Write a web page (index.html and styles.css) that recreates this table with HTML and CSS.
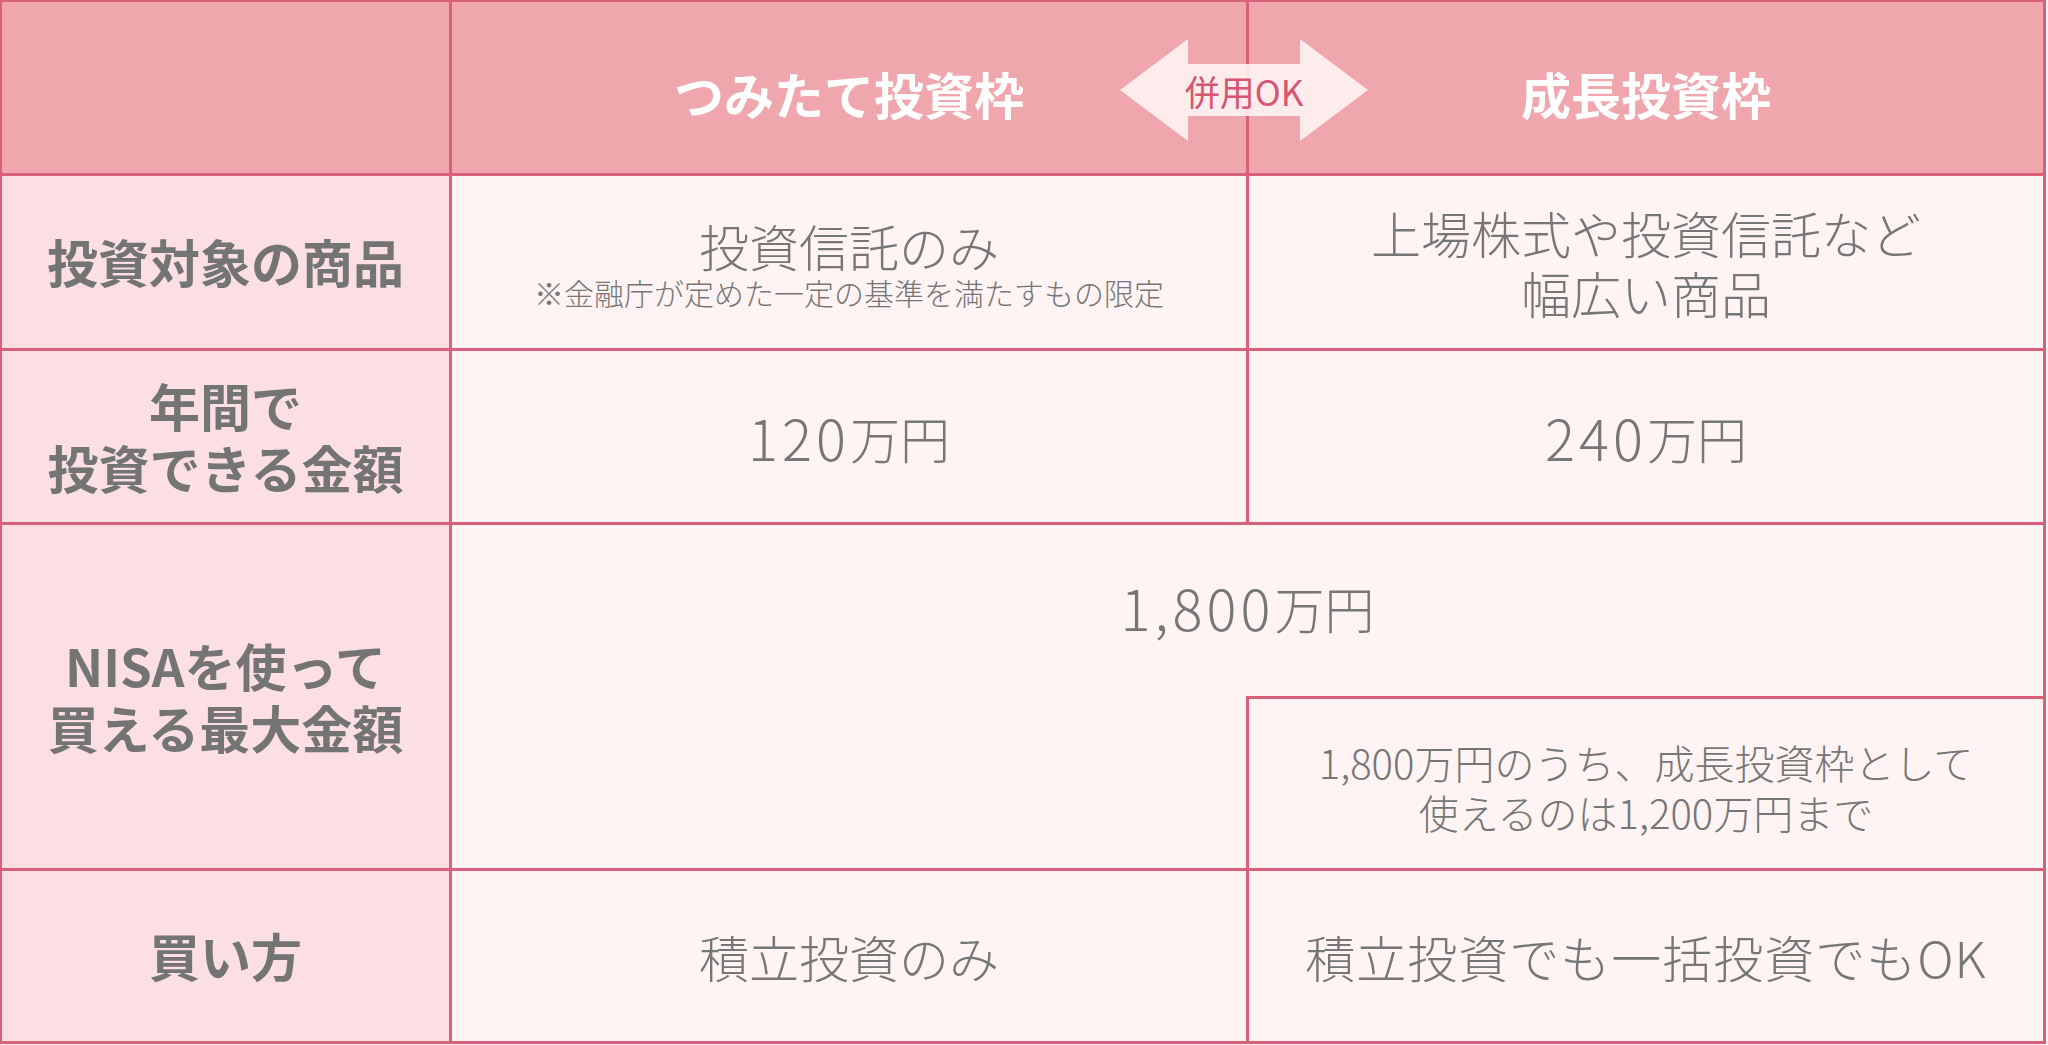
FILE: index.html
```html
<!DOCTYPE html>
<html lang="ja">
<head>
<meta charset="utf-8">
<title>NISA 比較表</title>
<link rel="stylesheet" href="styles.css">
</head>
<body>
<div class="table">
  <div class="cell head corner"></div>
  <div class="cell head">つみたて投資枠</div>
  <div class="cell head">成長投資枠</div>

  <div class="cell label">投資対象の商品</div>
  <div class="cell body">
    <div class="stack">
      <span class="main">投資信託のみ</span>
      <span class="note">※金融庁が定めた一定の基準を満たすもの限定</span>
    </div>
  </div>
  <div class="cell body">上場株式や投資信託など<br>幅広い商品</div>

  <div class="cell label">年間で<br>投資できる金額</div>
  <div class="cell body"><span class="digits">120</span>万円</div>
  <div class="cell body"><span class="digits">240</span>万円</div>

  <div class="cell label tall">NISAを使って<br>買える最大金額</div>
  <div class="cell body wide"><span class="digits">1,800</span>万円</div>
  <div class="cell body empty"></div>
  <div class="cell body sub">1,800万円のうち、成長投資枠として<br>使えるのは1,200万円まで</div>

  <div class="cell label">買い方</div>
  <div class="cell body">積立投資のみ</div>
  <div class="cell body wider">積立投資でも一括投資でもOK</div>

  <div class="badge">
    <svg class="arrow" viewBox="0 0 248 102" width="248" height="102">
      <polygon points="0,51 68,0 68,25 180,25 180,0 248,51 180,102 180,77 68,77 68,102" />
    </svg>
    <span class="badge-text">併用OK</span>
  </div>
</div>
</body>
</html>
```

FILE: styles.css
```css
* { box-sizing: border-box; }

html, body {
  margin: 0;
  padding: 0;
  background: #fff4f3;
}

body {
  font-family: "Noto Sans CJK JP", "Noto Sans", sans-serif;
  color: #777777;
}

.table {
  position: relative;
  width: 2046px;
  height: 1044px;
  display: grid;
  grid-template-columns: 450px 797px 1fr;
  grid-template-rows: 174px 175px 174px 171px 175px 1fr;
  border-top: 2px solid #d9607a;
  border-left: 2px solid #d9607a;
}

.cell {
  display: flex;
  align-items: center;
  justify-content: center;
  text-align: center;
  border-right: 3px solid #d9607a;
  border-bottom: 3px solid #d9607a;
  font-size: 50px;
  line-height: 1.2;
  background: #fff4f3;
}

.head {
  background: #f0a6ad;
  color: #ffffff;
  font-weight: 700;
  font-size: 50px;
  padding-top: 10px;
}

.label {
  background: #fbdfe3;
  font-weight: 700;
  color: #747474;
  font-size: 51px;
}

.label.tall {
  grid-row: 4 / 6;
}

.body {
  font-weight: 300;
  color: #767676;
}

.stack {
  display: flex;
  flex-direction: column;
  align-items: center;
}

.stack .main {
  font-size: 50px;
  line-height: 60px;
}

.stack .note {
  font-size: 30px;
  line-height: 34px;
}

.digits {
  font-size: 56px;
  line-height: 1;
  letter-spacing: 4px;
}

.wide {
  grid-column: 2 / 4;
  border-bottom: none;
  padding-bottom: 8px;
}

.empty {
  grid-column: 2;
}

.sub {
  border-top: 3px solid #d9607a;
  font-size: 40px;
  line-height: 50px;
  padding-top: 6px;
}

.wider {
  letter-spacing: 1px;
}

.badge {
  position: absolute;
  left: 1118px;
  top: 37px;
  width: 248px;
  height: 102px;
  display: flex;
  align-items: center;
  justify-content: center;
}

.arrow {
  position: absolute;
  left: 0;
  top: 0;
}

.arrow polygon {
  fill: #fff6f5;
  fill-opacity: 0.88;
}

.badge-text {
  position: relative;
  font-size: 35px;
  line-height: 1;
  color: #d45670;
  font-weight: 400;
}
```
